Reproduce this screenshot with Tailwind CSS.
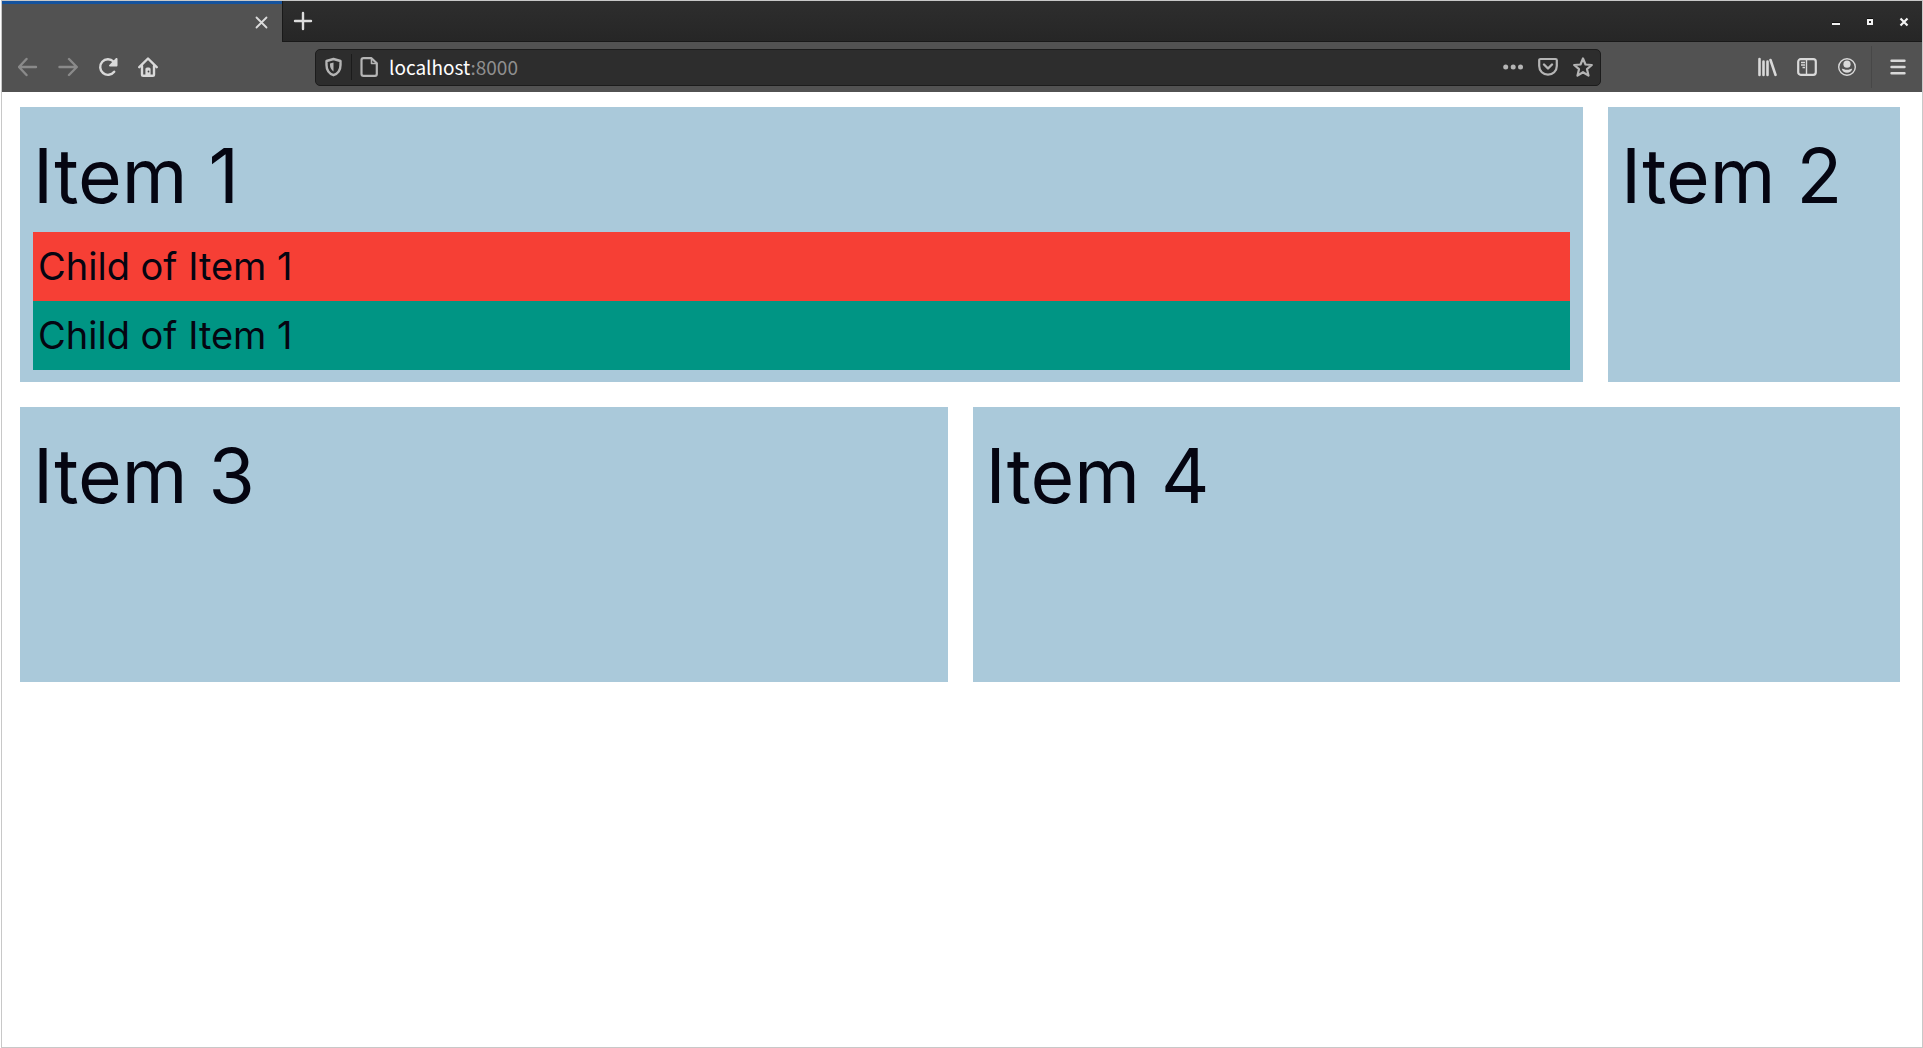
<!DOCTYPE html>
<html lang="en">
<head>
    <meta charset="UTF-8">
    <title>localhost:8000</title>
    <script src="https://cdn.jsdelivr.net/npm/@tailwindcss/browser@4"></script>
</head>
<body class="bg-white pl-px font-['Inter',sans-serif] text-[#050511]">
<div class="flex min-h-screen flex-col border border-[#c8c8c8]">

    <!-- Tab bar -->
    <header class="flex h-[41px] bg-linear-to-b from-[#2e2e2e] to-[#262626] text-[#dcdcdc]">
        <div class="flex w-[280px] items-center justify-end border-t-3 border-[#15539e] bg-[#525252] pr-2">
            <button aria-label="Close tab" class="flex size-6 items-center justify-center">
                <svg class="size-5" viewBox="0 0 20 20" fill="none" stroke="currentColor" stroke-width="1.8" stroke-linecap="round"><path d="M4.500 4.500l10 10M14.500 4.500l-10 10"/></svg>
            </button>
        </div>
        <div class="flex flex-1 items-center justify-between border-b border-l border-[#191919] pr-[1px]">
            <button aria-label="New tab" class="flex w-10 items-center justify-center">
                <svg class="size-5" viewBox="0 0 20 20" fill="none" stroke="currentColor" stroke-width="2.400" stroke-linecap="round"><path d="M10 2v16M2 10h16"/></svg>
            </button>
            <div class="flex text-[#f2f2f2]">
                <button aria-label="Minimize" class="flex w-[34px] justify-center">
                    <svg class="size-5" viewBox="0 0 20 20"><path fill="#111" d="M6 11h8v1H6z"/><path fill="currentColor" d="M6 12h8v2H6z"/></svg>
                </button>
                <button aria-label="Maximize" class="flex w-[34px] justify-center">
                    <svg class="size-5" viewBox="0 0 20 20"><path fill="#111" d="M7 7h6v1H7z"/><path fill="currentColor" fill-rule="evenodd" d="M7 8h6v6H7zM9 10v2h2v-2z"/></svg>
                </button>
                <button aria-label="Close" class="flex w-[34px] justify-center">
                    <svg class="size-5" viewBox="0 0 20 20" fill="none"><path stroke="currentColor" stroke-width="2.200" d="M6.500 7.500l7 7M13.500 7.500l-7 7"/></svg>
                </button>
            </div>
        </div>
    </header>

    <!-- Navigation bar -->
    <nav class="flex h-[50px] items-center bg-[#525252] pr-1 pl-[6px] text-[#d9d9d9]">
        <button aria-label="Back" class="flex w-10 justify-center text-[#8a8a8a]">
            <svg class="size-5" viewBox="0 0 20 20" fill="none" stroke="currentColor" stroke-width="2.400" stroke-linecap="round" stroke-linejoin="round"><path d="M18 10H1.500M8.500 2L1 10L8.500 18"/></svg>
        </button>
        <button aria-label="Forward" class="flex w-10 justify-center text-[#8a8a8a]">
            <svg class="size-5" viewBox="0 0 20 20" fill="none" stroke="currentColor" stroke-width="2.400" stroke-linecap="round" stroke-linejoin="round"><path d="M1.500 10h17M11 2l7.800 8l-7.800 8"/></svg>
        </button>
        <button aria-label="Reload" class="flex w-10 justify-center">
            <svg class="size-5" viewBox="0 0 20 20" fill="none" stroke="currentColor" stroke-width="2.400" stroke-linecap="round"><path d="M16.200 14.800A7.800 7.800 0 1 1 15.500 4.500"/><path fill="currentColor" stroke="none" d="M18.500 1c.6 0 1 .4 1 1v6.500c0 .5-.4 1-1 1H12c-.9 0-1.300-.9-.7-1.500l6.500-6.700c.2-.2.400-.3.700-.3z"/></svg>
        </button>
        <button aria-label="Home" class="flex w-10 justify-center">
            <svg class="size-5" viewBox="0 0 20 20" fill="none" stroke="currentColor" stroke-width="2.400" stroke-linecap="round" stroke-linejoin="round"><path d="M1.300 10.200L10 1.500l8.700 8.700"/><path d="M4 9v8.500c0 .8.500 1.300 1.300 1.300h9.400c.8 0 1.300-.5 1.300-1.300V9"/><path stroke-width="1.200" fill="currentColor" d="M8 18v-6c0-.6.400-1 1-1h2c.6 0 1 .4 1 1v6z"/><circle cx="10.500" cy="14.500" r=".9" fill="#444" stroke="none"/></svg>
        </button>
        <div class="w-[147px]"></div>

        <div class="flex h-[37px] flex-1 items-center rounded-[5px] border border-[#1c1c1c] bg-[#2d2d2d] text-[#b5b5b5]">
            <button aria-label="Tracking protection" class="flex w-[35px] justify-center">
                <svg class="size-5" viewBox="0 0 20 20" fill="none" stroke="currentColor" stroke-width="2.400" stroke-linejoin="round"><path d="M9.500 2L16.500 4v4c0 5-2.500 8.500-7 10.200C5 16.500 2.500 13 2.500 8V4z"/><path fill="currentColor" stroke="none" d="M9.500 5.500v9C7.500 13 6 11 6 8V6.500z"/></svg>
            </button>
            <div class="h-[26px] w-px bg-[#1b1b1b]"></div>
            <button aria-label="Site information" class="flex w-[35px] justify-center">
                <svg class="size-5" viewBox="0 0 20 20" fill="none" stroke="currentColor" stroke-width="2.200" stroke-linejoin="round"><path d="M3.500 1.200h8l5.300 5V17c0 1-.8 1.800-1.800 1.800H3.500c-1 0-2-.8-2-1.800V3c0-1 .8-1.800 2-1.800z"/><path stroke-width="1.600" d="M11.500 1.500v5h5"/></svg>
            </button>
            <div class="flex-1 pl-[2px] font-['Noto_Sans_CJK_SC',sans-serif] text-[19px] leading-7 text-[#8f8f8f]"><span class="text-white">localhost</span>:8000</div>
            <button aria-label="Page actions" class="flex w-[35px] justify-center">
                <svg class="size-5" viewBox="0 0 20 20" fill="currentColor"><circle cx="2.700" cy="10" r="2.500"/><circle cx="10.200" cy="10" r="2.500"/><circle cx="17.500" cy="10" r="2.500"/></svg>
            </button>
            <button aria-label="Save to Pocket" class="flex w-[35px] justify-center">
                <svg class="size-5" viewBox="0 0 20 20" fill="none" stroke="currentColor" stroke-width="2.200" stroke-linecap="round" stroke-linejoin="round"><path d="M2.500 2h15c.8 0 1.300.5 1.300 1.300V9c0 5-4 8.700-8.800 8.700S1.200 14 1.200 9V3.300C1.200 2.500 1.700 2 2.500 2z"/><path stroke-width="2.400" d="M6 7.500l4 4l4-4"/></svg>
            </button>
            <button aria-label="Bookmark this page" class="flex w-[35px] justify-center">
                <svg class="size-5" viewBox="0 0 20 20" fill="none" stroke="currentColor" stroke-width="2.200" stroke-linejoin="round"><path d="M10 1.500l2.500 6l6.300.5l-4.800 4.200l1.500 6.400L10 15.200l-5.500 3.400L6 12.200L1.200 8l6.300-.5z"/></svg>
            </button>
        </div>

        <div class="w-[146px]"></div>
        <button aria-label="Library" class="flex w-10 justify-center">
            <svg class="size-5" viewBox="0 0 20 20" fill="none" stroke="currentColor" stroke-width="2.600" stroke-linecap="round"><path d="M2.500 2v16M6.500 4.500V18M10.500 4.500V18M13.500 3L18.500 17.800"/></svg>
        </button>
        <button aria-label="Sidebars" class="flex w-10 justify-center">
            <svg class="size-5" viewBox="0 0 20 20" fill="none" stroke="currentColor" stroke-width="2.200"><rect x="1.200" y="2.200" width="17.600" height="15.600" rx="2.500"/><path stroke-width="1.400" d="M9.500 3v14M4 5.500h4M4 8h4M5.500 10.500H8"/></svg>
        </button>
        <button aria-label="Account" class="flex w-10 justify-center">
            <svg class="size-5" viewBox="0 0 20 20" fill="none"><circle cx="10" cy="10" r="8.300" stroke="currentColor" stroke-width="1.400"/><circle cx="10" cy="7.200" r="3.600" fill="currentColor"/><path fill="currentColor" d="M4.800 11.800c1.500-.5 2.200 1 5.200 1s3.700-1.500 5.200-1c-.6 2.400-2.500 4-5.200 4s-4.600-1.600-5.200-4z"/></svg>
        </button>
        <div class="mr-[6px] ml-1 h-[42px] w-px bg-[#474747]"></div>
        <button aria-label="Menu" class="flex w-10 justify-center">
            <svg class="size-5" viewBox="0 0 20 20" fill="none" stroke="currentColor" stroke-width="2.400" stroke-linecap="round"><path d="M3.500 3.800h13M3.500 10h13M3.500 16.200h13"/></svg>
        </button>
    </nav>

    <!-- Page -->
    <main class="flex flex-col gap-[25px] pt-[15px] pr-[22px] pl-[18px]">
        <div class="flex gap-[25px]">
            <section class="min-h-[275px] flex-1 bg-[#aac9da] px-[13px] py-3">
                <h1 class="text-[75px] leading-[113px]">Item 1</h1>
                <p class="bg-[#f63f35] px-[5px] text-[38px] leading-[69px]">Child of Item 1</p>
                <p class="bg-[#009584] px-[5px] text-[38px] leading-[69px]">Child of Item 1</p>
            </section>
            <section class="w-[292px] bg-[#aac9da] px-[13px] py-3">
                <h1 class="text-[75px] leading-[113px]">Item 2</h1>
            </section>
        </div>
        <div class="flex gap-[25px]">
            <section class="min-h-[275px] flex-1 bg-[#aac9da] px-[13px] py-3">
                <h1 class="text-[75px] leading-[113px]">Item 3</h1>
            </section>
            <section class="min-h-[275px] flex-1 bg-[#aac9da] px-[13px] py-3">
                <h1 class="text-[75px] leading-[113px]">Item 4</h1>
            </section>
        </div>
    </main>
</div>
</body>
</html>
